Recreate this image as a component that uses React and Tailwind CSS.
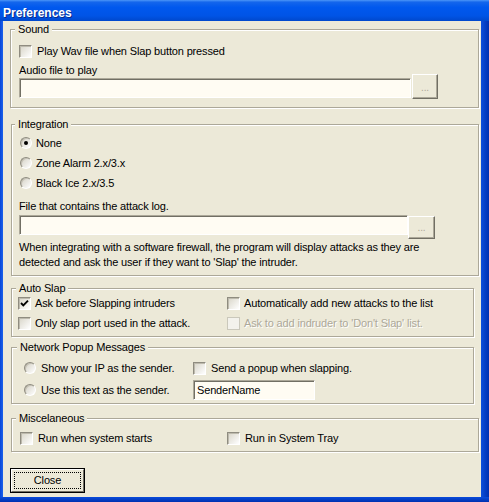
import React from "react";

function Check({ checked, disabled }) {
  return (
    <span
      className={
        disabled
          ? "relative block w-[13px] h-[13px] shrink-0 border border-[#CAC8BB] bg-[#F3F2EC]"
          : "relative block w-[13px] h-[13px] shrink-0 border border-t-[#8F8C80] border-l-[#8F8C80] border-b-white border-r-white bg-[linear-gradient(135deg,#D8D5C8,#FFFFFF)] shadow-[inset_1px_1px_0_#BDBAAD]"
      }
    >
      {checked && (
        <svg className="absolute left-0 top-0" width="11" height="11" viewBox="0 0 11 11">
          <path d="M2 5 L4.3 7.3 L9 2.6" stroke="#000" strokeWidth="1.9" fill="none" />
        </svg>
      )}
    </span>
  );
}

function Radio({ checked }) {
  return (
    <span className="relative block w-[12px] h-[12px] shrink-0 rounded-full border border-t-[#8F8C80] border-l-[#8F8C80] border-b-white border-r-white bg-[linear-gradient(135deg,#D4D1C4,#FFFFFF)] shadow-[inset_1px_1px_0_#C4C1B4]">
      {checked && (
        <span className="absolute left-[3px] top-[3px] w-[4px] h-[4px] rounded-full bg-black" />
      )}
    </span>
  );
}

function Group({ label, labelClass, className, children }) {
  return (
    <div
      className={
        "relative shrink-0 border border-[#ACA899] shadow-[1px_1px_0_#fff,inset_1px_1px_0_#fff] " +
        className
      }
    >
      <span className={"absolute top-[-7px] px-[3px] bg-[#ECE9D8] leading-[13px] " + labelClass}>
        {label}
      </span>
      {children}
    </div>
  );
}

function Input({ className, children }) {
  return (
    <div
      className={
        "shrink-0 bg-[#FFFCF3] border border-t-[#ACA899] border-l-[#ACA899] border-b-white border-r-white shadow-[inset_1px_1px_0_#716F64] " +
        className
      }
    >
      {children}
    </div>
  );
}

function DotsButton({ className }) {
  return (
    <div
      className={
        "shrink-0 flex items-end justify-center pb-[5px] bg-[#ECE9D8] border border-t-white border-l-white border-b-[#716F64] border-r-[#716F64] shadow-[inset_-1px_-1px_0_#ACA899] text-[#ACA899] text-[10px] leading-[10px] " +
        className
      }
    >
      ...
    </div>
  );
}

export default function App() {
  return (
    <div className="w-[489px] h-[502px] flex flex-col overflow-hidden font-['Liberation_Sans',Arial,sans-serif] text-[11px] tracking-[-0.15px] text-black">
      <div className="h-[21px] shrink-0 flex items-center pl-[3px] pt-[4px] bg-[linear-gradient(180deg,#4C96F8_0%,#1466EC_10%,#0058EE_35%,#0054E6_75%,#0048CC_100%)] text-white font-bold text-[12px] tracking-normal [text-shadow:1px_1px_0_#0A2A8A]">
        Preferences
      </div>
      <div className="flex flex-1 min-h-0">
        <div className="w-[3px] shrink-0 bg-[linear-gradient(90deg,#0846D8,#1B62EC)]" />
        <div className="w-[478px] shrink-0 bg-[#ECE9D8] flex flex-col">
          {/* Sound */}
          <Group label="Sound" labelClass="left-[4px]" className="ml-[7px] mt-[8px] w-[469px] h-[79px] pl-[8px] pt-[15px]">
            <div className="flex items-center gap-[5px] h-[13px]">
              <Check />
              <span className="leading-[13px]">Play Wav file when Slap button pressed</span>
            </div>
            <div className="mt-[6px] leading-[13px]">Audio file to play</div>
            <div className="flex items-end gap-[1px] mt-[-3px]">
              <Input className="w-[392px] h-[20px] mb-[1px]" />
              <DotsButton className="w-[26px] h-[25px]" />
            </div>
          </Group>

          {/* Integration */}
          <Group label="Integration" labelClass="left-[3px]" className="ml-[8px] mt-[16px] w-[468px] h-[152px] pl-[7px] pt-[8px]">
            <div className="flex items-center gap-[4px] h-[20px] ml-[1px]">
              <Radio checked />
              <span>None</span>
            </div>
            <div className="flex items-center gap-[4px] h-[20px] ml-[1px]">
              <Radio />
              <span>Zone Alarm 2.x/3.x</span>
            </div>
            <div className="flex items-center gap-[4px] h-[20px] ml-[1px]">
              <Radio />
              <span>Black Ice 2.x/3.5</span>
            </div>
            <div className="mt-[7px] leading-[13px]">File that contains the attack log.</div>
            <div className="flex items-start mt-[2px]">
              <Input className="w-[389px] h-[20px]" />
              <DotsButton className="w-[27px] h-[23px] mt-[1px] pb-[4px]" />
            </div>
            <div className="mt-[1px] leading-[15px] whitespace-nowrap">
              When integrating with a software firewall, the program will display attacks as they are
              <br />
              detected and ask the user if they want to 'Slap' the intruder.
            </div>
          </Group>

          {/* Auto Slap */}
          <Group label="Auto Slap" labelClass="left-[4px]" className="ml-[8px] mt-[12px] w-[463px] h-[49px] pl-[6px] pt-[4px]">
            <div className="flex h-[20px] items-center">
              <div className="w-[209px] flex items-center gap-[4px]">
                <Check checked />
                <span>Ask before Slapping intruders</span>
              </div>
              <div className="flex items-center gap-[4px]">
                <Check />
                <span>Automatically add new attacks to the list</span>
              </div>
            </div>
            <div className="flex h-[20px] items-center">
              <div className="w-[209px] flex items-center gap-[4px]">
                <Check />
                <span>Only slap port used in the attack.</span>
              </div>
              <div className="flex items-center gap-[4px]">
                <Check disabled />
                <span className="text-[#ACA899] [text-shadow:1px_1px_0_#fff]">
                  Ask to add indruder to 'Don't Slap' list.
                </span>
              </div>
            </div>
          </Group>

          {/* Network Popup Messages */}
          <Group label="Network Popup Messages" labelClass="left-[5px]" className="ml-[8px] mt-[10px] w-[463px] h-[57px] pl-[12px] pt-[10px]">
            <div className="flex h-[20px] items-center">
              <div className="w-[169px] flex items-center gap-[5px]">
                <Radio />
                <span>Show your IP as the sender.</span>
              </div>
              <div className="flex items-center gap-[5px]">
                <Check />
                <span>Send a popup when slapping.</span>
              </div>
            </div>
            <div className="flex h-[20px] items-center mt-[2px]">
              <div className="w-[169px] flex items-center gap-[5px]">
                <Radio />
                <span>Use this text as the sender.</span>
              </div>
              <Input className="w-[122px] h-[20px] pl-[3px] flex items-center">
                <span className="leading-[13px]">SenderName</span>
              </Input>
            </div>
          </Group>

          {/* Miscelaneous */}
          <Group label="Miscelaneous" labelClass="left-[4px]" className="ml-[8px] mt-[14px] w-[468px] h-[34px] pl-[8px] pt-[9px]">
            <div className="flex h-[20px] items-center">
              <div className="w-[207px] flex items-center gap-[5px]">
                <Check />
                <span>Run when system starts</span>
              </div>
              <div className="flex items-center gap-[5px]">
                <Check />
                <span>Run in System Tray</span>
              </div>
            </div>
          </Group>

          <div className="ml-[7px] mt-[16px] w-[75px] h-[25px] shrink-0 border border-black bg-[#ECE9D8]">
            <div className="w-full h-full border border-t-white border-l-white border-b-[#716F64] border-r-[#716F64] p-[2px]">
              <div className="w-full h-full border border-dotted border-black flex items-center justify-center leading-[13px]">
                Close
              </div>
            </div>
          </div>
        </div>
        <div className="flex-1 bg-[linear-gradient(90deg,#0D4FDC,#0030B0)]" />
      </div>
      <div className="h-[5px] shrink-0 bg-[linear-gradient(180deg,#0A4CDB,#0031B0)]" />
    </div>
  );
}
